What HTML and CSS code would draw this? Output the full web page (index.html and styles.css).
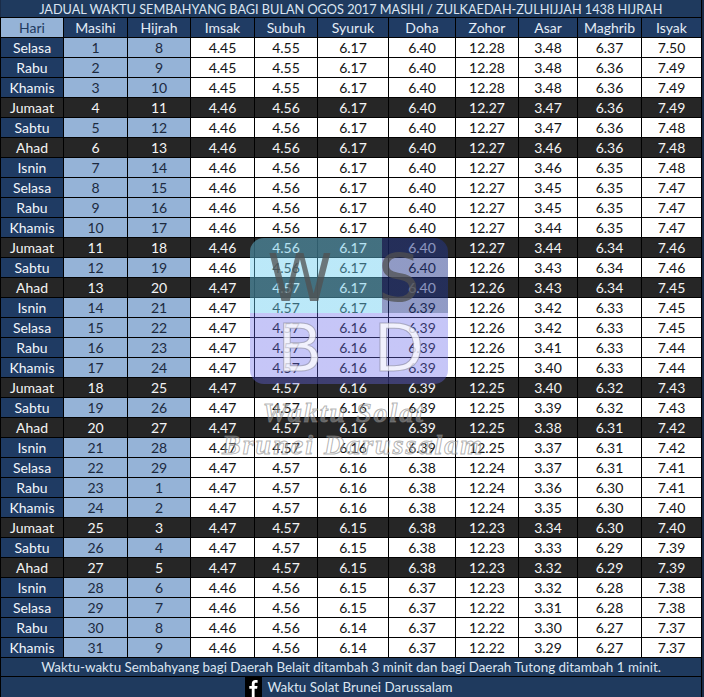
FILE: index.html
```html
<!DOCTYPE html>
<html lang="ms">
<head>
<meta charset="utf-8">
<title>Jadual Waktu Sembahyang Ogos 2017</title>
<link rel="stylesheet" href="styles.css">
</head>
<body>
<div class="sheet">
<table class="grid">
<colgroup>
<col class="c63"><col class="c64"><col class="c63"><col class="c64"><col class="c63"><col class="c71"><col class="c67"><col class="c63"><col class="c59"><col class="c64"><col class="c60">
</colgroup>
<thead>
<tr class="title"><th colspan="11">JADUAL WAKTU SEMBAHYANG BAGI BULAN OGOS 2017 MASIHI / ZULKAEDAH-ZULHIJJAH 1438 HIJRAH</th></tr>
<tr class="head"><th class="hari">Hari</th><th>Masihi</th><th>Hijrah</th><th>Imsak</th><th>Subuh</th><th>Syuruk</th><th>Doha</th><th>Zohor</th><th>Asar</th><th>Maghrib</th><th>Isyak</th></tr>
</thead>
<tbody>
<tr><td class="day">Selasa</td><td class="lb">1</td><td class="lb">8</td><td>4.45</td><td>4.55</td><td>6.17</td><td>6.40</td><td>12.28</td><td>3.48</td><td>6.37</td><td>7.50</td></tr>
<tr><td class="day">Rabu</td><td class="lb">2</td><td class="lb">9</td><td>4.45</td><td>4.55</td><td>6.17</td><td>6.40</td><td>12.28</td><td>3.48</td><td>6.36</td><td>7.49</td></tr>
<tr><td class="day">Khamis</td><td class="lb">3</td><td class="lb">10</td><td>4.45</td><td>4.55</td><td>6.17</td><td>6.40</td><td>12.28</td><td>3.48</td><td>6.36</td><td>7.49</td></tr>
<tr class="dark"><td class="day">Jumaat</td><td class="lb">4</td><td class="lb">11</td><td>4.46</td><td>4.56</td><td>6.17</td><td>6.40</td><td>12.27</td><td>3.47</td><td>6.36</td><td>7.49</td></tr>
<tr><td class="day">Sabtu</td><td class="lb">5</td><td class="lb">12</td><td>4.46</td><td>4.56</td><td>6.17</td><td>6.40</td><td>12.27</td><td>3.47</td><td>6.36</td><td>7.48</td></tr>
<tr class="dark"><td class="day">Ahad</td><td class="lb">6</td><td class="lb">13</td><td>4.46</td><td>4.56</td><td>6.17</td><td>6.40</td><td>12.27</td><td>3.46</td><td>6.36</td><td>7.48</td></tr>
<tr><td class="day">Isnin</td><td class="lb">7</td><td class="lb">14</td><td>4.46</td><td>4.56</td><td>6.17</td><td>6.40</td><td>12.27</td><td>3.46</td><td>6.35</td><td>7.48</td></tr>
<tr><td class="day">Selasa</td><td class="lb">8</td><td class="lb">15</td><td>4.46</td><td>4.56</td><td>6.17</td><td>6.40</td><td>12.27</td><td>3.45</td><td>6.35</td><td>7.47</td></tr>
<tr><td class="day">Rabu</td><td class="lb">9</td><td class="lb">16</td><td>4.46</td><td>4.56</td><td>6.17</td><td>6.40</td><td>12.27</td><td>3.45</td><td>6.35</td><td>7.47</td></tr>
<tr><td class="day">Khamis</td><td class="lb">10</td><td class="lb">17</td><td>4.46</td><td>4.56</td><td>6.17</td><td>6.40</td><td>12.27</td><td>3.44</td><td>6.35</td><td>7.47</td></tr>
<tr class="dark"><td class="day">Jumaat</td><td class="lb">11</td><td class="lb">18</td><td>4.46</td><td>4.56</td><td>6.17</td><td>6.40</td><td>12.27</td><td>3.44</td><td>6.34</td><td>7.46</td></tr>
<tr><td class="day">Sabtu</td><td class="lb">12</td><td class="lb">19</td><td>4.46</td><td>4.56</td><td>6.17</td><td>6.40</td><td>12.26</td><td>3.43</td><td>6.34</td><td>7.46</td></tr>
<tr class="dark"><td class="day">Ahad</td><td class="lb">13</td><td class="lb">20</td><td>4.47</td><td>4.57</td><td>6.17</td><td>6.40</td><td>12.26</td><td>3.43</td><td>6.34</td><td>7.45</td></tr>
<tr><td class="day">Isnin</td><td class="lb">14</td><td class="lb">21</td><td>4.47</td><td>4.57</td><td>6.17</td><td>6.39</td><td>12.26</td><td>3.42</td><td>6.33</td><td>7.45</td></tr>
<tr><td class="day">Selasa</td><td class="lb">15</td><td class="lb">22</td><td>4.47</td><td>4.57</td><td>6.16</td><td>6.39</td><td>12.26</td><td>3.42</td><td>6.33</td><td>7.45</td></tr>
<tr><td class="day">Rabu</td><td class="lb">16</td><td class="lb">23</td><td>4.47</td><td>4.57</td><td>6.16</td><td>6.39</td><td>12.26</td><td>3.41</td><td>6.33</td><td>7.44</td></tr>
<tr><td class="day">Khamis</td><td class="lb">17</td><td class="lb">24</td><td>4.47</td><td>4.57</td><td>6.16</td><td>6.39</td><td>12.25</td><td>3.40</td><td>6.33</td><td>7.44</td></tr>
<tr class="dark"><td class="day">Jumaat</td><td class="lb">18</td><td class="lb">25</td><td>4.47</td><td>4.57</td><td>6.16</td><td>6.39</td><td>12.25</td><td>3.40</td><td>6.32</td><td>7.43</td></tr>
<tr><td class="day">Sabtu</td><td class="lb">19</td><td class="lb">26</td><td>4.47</td><td>4.57</td><td>6.16</td><td>6.39</td><td>12.25</td><td>3.39</td><td>6.32</td><td>7.43</td></tr>
<tr class="dark"><td class="day">Ahad</td><td class="lb">20</td><td class="lb">27</td><td>4.47</td><td>4.57</td><td>6.16</td><td>6.39</td><td>12.25</td><td>3.38</td><td>6.31</td><td>7.42</td></tr>
<tr><td class="day">Isnin</td><td class="lb">21</td><td class="lb">28</td><td>4.47</td><td>4.57</td><td>6.16</td><td>6.39</td><td>12.25</td><td>3.37</td><td>6.31</td><td>7.42</td></tr>
<tr><td class="day">Selasa</td><td class="lb">22</td><td class="lb">29</td><td>4.47</td><td>4.57</td><td>6.16</td><td>6.38</td><td>12.24</td><td>3.37</td><td>6.31</td><td>7.41</td></tr>
<tr><td class="day">Rabu</td><td class="lb">23</td><td class="lb">1</td><td>4.47</td><td>4.57</td><td>6.16</td><td>6.38</td><td>12.24</td><td>3.36</td><td>6.30</td><td>7.41</td></tr>
<tr><td class="day">Khamis</td><td class="lb">24</td><td class="lb">2</td><td>4.47</td><td>4.57</td><td>6.16</td><td>6.38</td><td>12.24</td><td>3.35</td><td>6.30</td><td>7.40</td></tr>
<tr class="dark"><td class="day">Jumaat</td><td class="lb">25</td><td class="lb">3</td><td>4.47</td><td>4.57</td><td>6.15</td><td>6.38</td><td>12.23</td><td>3.34</td><td>6.30</td><td>7.40</td></tr>
<tr><td class="day">Sabtu</td><td class="lb">26</td><td class="lb">4</td><td>4.47</td><td>4.57</td><td>6.15</td><td>6.38</td><td>12.23</td><td>3.33</td><td>6.29</td><td>7.39</td></tr>
<tr class="dark"><td class="day">Ahad</td><td class="lb">27</td><td class="lb">5</td><td>4.47</td><td>4.57</td><td>6.15</td><td>6.38</td><td>12.23</td><td>3.32</td><td>6.29</td><td>7.39</td></tr>
<tr><td class="day">Isnin</td><td class="lb">28</td><td class="lb">6</td><td>4.46</td><td>4.56</td><td>6.15</td><td>6.37</td><td>12.23</td><td>3.32</td><td>6.28</td><td>7.38</td></tr>
<tr><td class="day">Selasa</td><td class="lb">29</td><td class="lb">7</td><td>4.46</td><td>4.56</td><td>6.15</td><td>6.37</td><td>12.22</td><td>3.31</td><td>6.28</td><td>7.38</td></tr>
<tr><td class="day">Rabu</td><td class="lb">30</td><td class="lb">8</td><td>4.46</td><td>4.56</td><td>6.14</td><td>6.37</td><td>12.22</td><td>3.30</td><td>6.27</td><td>7.37</td></tr>
<tr><td class="day">Khamis</td><td class="lb">31</td><td class="lb">9</td><td>4.46</td><td>4.56</td><td>6.14</td><td>6.37</td><td>12.22</td><td>3.29</td><td>6.27</td><td>7.37</td></tr>
</tbody>
<tfoot>
<tr class="note"><td colspan="11">Waktu-waktu Sembahyang bagi Daerah Belait ditambah 3 minit dan bagi Daerah Tutong ditambah 1 minit.</td></tr>
<tr class="fb"><td colspan="11"><span class="fbwrap"><svg class="fbicon" width="17" height="20" viewBox="0 0 17 20" aria-hidden="true"><rect width="17" height="20" fill="#000"/><path d="M9.6 20v-8.2h2.5l.4-2.9H9.6V7.2c0-.8.3-1.4 1.4-1.4h1.6V3.2c-.3 0-1.2-.1-2.2-.1-2.2 0-3.6 1.3-3.6 3.7v2.1H4.3v2.9h2.5V20z" fill="#fff"/></svg><span>Waktu Solat Brunei Darussalam</span></span></td></tr>
</tfoot>
</table>

<div class="wm" aria-hidden="true">
  <span class="lt w">W</span><span class="lt s">S</span>
  <span class="lt b">B</span><span class="lt d">D</span>
</div>
<div class="script" aria-hidden="true">
  <div class="l1">Waktu Solat</div>
  <div class="l2">Brunei Darussalam</div>
</div>
</div>
</body>
</html>
```

FILE: styles.css
```css
html, body {
  margin: 0;
  padding: 0;
  background: #1a2c48;
}

.sheet {
  position: relative;
  width: 704px;
  height: 697px;
  overflow: hidden;
  background: #1a2c48;
  font-family: Lato, "Noto Sans", sans-serif;
}

.grid {
  border-collapse: collapse;
  table-layout: fixed;
  width: 701px;
}

.c63 { width: 63px; }
.c64 { width: 64px; }
.c71 { width: 71px; }
.c67 { width: 67px; }
.c59 { width: 59px; }
.c60 { width: 60px; }

.grid th,
.grid td {
  border: 1px solid #000;
  padding: 0;
  text-align: center;
  vertical-align: middle;
  white-space: nowrap;
  overflow: hidden;
  font-weight: normal;
  font-size: 14px;
  height: 19px;
  line-height: 17px;
  color: #141414;
  background: #fff;
}

.grid .title th {
  height: 17px;
  line-height: 16px;
  background: #1f3a5e;
  color: #dbe5f1;
  font-size: 12.7px;
  border-top: 0;
  border-left: 0;
}

.grid .head th {
  background: #203c64;
  color: #e3ebf5;
}

.grid .head th.hari {
  background: #95b3d7;
  color: #1f3a5e;
}

.grid td.day {
  background: #1f3b63;
  color: #f2f6fb;
}

.grid td.lb {
  background: #95b3d7;
  color: #1c2a40;
}

.grid tr.dark td,
.grid tr.dark td.day,
.grid tr.dark td.lb {
  background: #262626;
  color: #f4f4f4;
}

.grid .note td {
  background: #1f3a5e;
  color: #dbe5f1;
  font-size: 13.4px;
  height: 18px;
}

.grid .fb td {
  background: #1f3a5e;
  color: #dbe5f1;
  font-size: 13.4px;
  height: 19px;
  line-height: 19px;
  border-bottom: 0;
}

.fbwrap {
  display: inline-flex;
  align-items: center;
  gap: 5px;
  vertical-align: top;
  padding-right: 4px;
}

.fbicon {
  display: block;
}

/* watermark logo */
.wm {
  position: absolute;
  left: 250px;
  top: 238px;
  width: 198px;
  height: 146px;
  border-radius: 14px;
  display: grid;
  grid-template-columns: 100px 98px;
  grid-template-rows: 75px 71px;
  background:
    linear-gradient(rgba(105, 205, 240, 0.45), rgba(105, 205, 240, 0.45)) 0 0 / 132px 75px no-repeat,
    linear-gradient(rgba(35, 55, 140, 0.5), rgba(35, 55, 140, 0.5)) 132px 0 / 66px 75px no-repeat,
    linear-gradient(rgba(105, 105, 235, 0.38), rgba(105, 105, 235, 0.38)) 0 75px / 198px 71px no-repeat;
  pointer-events: none;
}

.lt {
  font-family: "DejaVu Sans", sans-serif;
  font-size: 66px;
  line-height: 64px;
  height: 64px;
  align-self: center;
  justify-self: center;
}

.lt.w, .lt.s {
  color: rgba(80, 80, 80, 0.75);
  margin-top: 6px;
}

.lt.b, .lt.d {
  color: rgba(255, 255, 255, 0.75);
  -webkit-text-stroke: 1px rgba(120, 120, 140, 0.5);
}

.script {
  position: absolute;
  left: 218px;
  top: 399px;
  width: 270px;
  text-align: center;
  font-family: "Liberation Serif", serif;
  font-style: italic;
  font-weight: bold;
  color: rgba(255, 255, 255, 0.3);
  -webkit-text-stroke: 1px rgba(130, 130, 130, 0.6);
  pointer-events: none;
  line-height: 1;
  white-space: nowrap;
}

.script .l1 {
  font-size: 28px;
  letter-spacing: 2px;
  padding-right: 18px;
}

.script .l2 {
  font-size: 28px;
  letter-spacing: 2px;
  margin-top: 4px;
}
```
